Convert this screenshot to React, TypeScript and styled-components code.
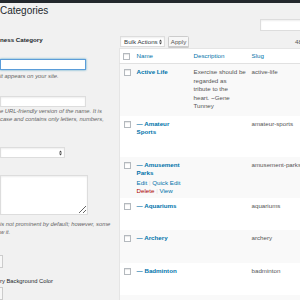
import styled, { createGlobalStyle } from "styled-components";

const GlobalStyle = createGlobalStyle`
  html, body { margin: 0; padding: 0; }
  body {
    width: 300px;
    height: 300px;
    overflow: hidden;
    background: #f1f1f1;
    font-family: "Liberation Sans", Arial, sans-serif;
    color: #444;
  }
`;

const AdminBar = styled.div`
  height: 3px;
  background: #23282d;
`;

const Page = styled.main`
  padding-top: 1px;
`;

const Title = styled.h1`
  margin: 0;
  height: 14px;
  font-size: 10px;
  font-weight: 400;
  line-height: 14px;
  color: #23282d;
`;

const Columns = styled.div`
  display: flex;
`;

const FormColumn = styled.section`
  flex: 0 0 119px;
`;

const ListColumn = styled.section`
  flex: 0 0 200px;
`;

const SectionHeading = styled.h2`
  margin: 17px 0 0;
  font-size: 6.2px;
  font-weight: 700;
  line-height: 9px;
  color: #23282d;
`;

const Field = styled.div<{ $top: number }>`
  margin-top: ${(p) => p.$top}px;
`;

const TextInput = styled.input<{ $focused?: boolean }>`
  display: block;
  box-sizing: border-box;
  width: 86px;
  height: 11px;
  margin: 0;
  padding: 0 2px;
  background: #fff;
  border: 1px solid ${(p) => (p.$focused ? "#5b9dd9" : "#ddd")};
  box-shadow: ${(p) =>
    p.$focused ? "0 0 2px rgba(30, 140, 190, 0.8)" : "inset 0 1px 2px rgba(0, 0, 0, 0.07)"};
  outline: none;
`;

const Help = styled.p<{ $top?: number }>`
  margin: ${(p) => p.$top ?? 0}px 0 0;
  font-size: 5.8px;
  font-style: italic;
  line-height: 8px;
  color: #666;
  white-space: nowrap;
`;

const FieldLabel = styled.div`
  font-size: 5.8px;
  line-height: 8px;
  color: #23282d;
  white-space: nowrap;
`;

const SelectBox = styled.div<{ $width: number }>`
  display: flex;
  align-items: center;
  justify-content: space-between;
  box-sizing: border-box;
  width: ${(p) => p.$width}px;
  height: 11px;
  padding: 0 2px 0 3px;
  background: #fff;
  border: 1px solid #ddd;
  box-shadow: inset 0 1px 2px rgba(0, 0, 0, 0.07);
  font-size: 6.2px;
  color: #32373c;
  white-space: nowrap;
`;

const TextArea = styled.textarea`
  display: block;
  box-sizing: border-box;
  width: 88px;
  height: 40px;
  margin: 0;
  background: #fff;
  border: 1px solid #ddd;
  box-shadow: inset 0 1px 2px rgba(0, 0, 0, 0.07);
  resize: vertical;
  outline: none;
`;

const ColorButton = styled.div`
  box-sizing: border-box;
  width: 3px;
  height: 13px;
  background: #f7f7f7;
  border: 1px solid #ccc;
  border-left: 0;
`;

const SearchBox = styled.input`
  display: block;
  box-sizing: border-box;
  width: 60px;
  height: 12px;
  margin: 1px 0 0 141px;
  background: #fff;
  border: 1px solid #ddd;
  box-shadow: inset 0 1px 2px rgba(0, 0, 0, 0.07);
`;

const TableNav = styled.div`
  display: flex;
  align-items: center;
  gap: 3px;
  height: 11px;
  margin-top: 5px;
  padding-left: 1px;
`;

const ApplyButton = styled.button`
  box-sizing: border-box;
  width: 21px;
  height: 11px;
  padding: 0;
  background: #f7f7f7;
  border: 1px solid #ccc;
  border-radius: 1.5px;
  box-shadow: 0 1px 0 #ccc;
  font-family: inherit;
  font-size: 6.2px;
  color: #555;
`;

const ItemCount = styled.span`
  margin-left: 103px;
  font-size: 6.2px;
  color: #555;
  white-space: nowrap;
`;

const Table = styled.table`
  width: 200px;
  margin-top: 1px;
  table-layout: fixed;
  border-collapse: collapse;
  background: #fff;
  border: 1px solid #e5e5e5;
  font-size: 6.2px;
`;

const HeadCell = styled.th`
  height: 14px;
  padding: 0 4px;
  border-bottom: 1px solid #e1e1e1;
  text-align: left;
  font-weight: 400;
  line-height: 14px;
  color: #0073aa;
`;

const CheckHead = styled.td`
  padding: 0 0 0 3px;
  border-bottom: 1px solid #e1e1e1;
  vertical-align: middle;
`;

const Row = styled.tr`
  &:nth-child(odd) {
    background: #f9f9f9;
  }
`;

const Cell = styled.td`
  padding: 4px 4px 2px;
  vertical-align: top;
  line-height: 8.5px;
  color: #555;
  white-space: nowrap;
`;

const DescriptionCell = styled(Cell)`
  padding-bottom: 5px;
`;

const CheckCell = styled.td`
  padding: 5px 0 0 4px;
  vertical-align: top;
`;

const Checkbox = styled.span`
  display: block;
  box-sizing: border-box;
  width: 7px;
  height: 7px;
  background: #fff;
  border: 1px solid #b4b9be;
  box-shadow: inset 0 1px 1px rgba(0, 0, 0, 0.1);
`;

const NameCell = styled(Cell)`
  white-space: normal;
`;

const TermName = styled.a`
  display: block;
  font-weight: 700;
  color: #0073aa;
  text-decoration: none;
`;

const RowActions = styled.div<{ $visible: boolean }>`
  padding-top: 1px;
  visibility: ${(p) => (p.$visible ? "visible" : "hidden")};
  white-space: nowrap;
  color: #ddd;
`;

const Action = styled.a<{ $danger?: boolean }>`
  color: ${(p) => (p.$danger ? "#a00" : "#0073aa")};
  text-decoration: none;
`;

function UpDownArrow() {
  return (
    <svg width="3" height="6" viewBox="0 0 3 6">
      <path d="M0 2.4 L1.5 0.4 L3 2.4 Z M0 3.6 L1.5 5.6 L3 3.6 Z" fill="#444" />
    </svg>
  );
}

type Term = {
  name: string;
  slug: string;
  depth: number;
  desc?: string[];
  hovered?: boolean;
};

const terms: Term[] = [
  {
    name: "Active Life",
    slug: "active-life",
    depth: 0,
    desc: ["Exercise should be", "regarded as", "tribute to the", "heart. ~Gene", "Tunney"],
  },
  { name: "Amateur Sports", slug: "amateur-sports", depth: 1 },
  { name: "Amusement Parks", slug: "amusement-parks", depth: 1, hovered: true },
  { name: "Aquariums", slug: "aquariums", depth: 1 },
  { name: "Archery", slug: "archery", depth: 1 },
  { name: "Badminton", slug: "badminton", depth: 1 },
  { name: "Baseball Fields", slug: "baseball-fields", depth: 1 },
];

function TermRow({ term }: { term: Term }) {
  return (
    <Row>
      <CheckCell>
        <Checkbox />
      </CheckCell>
      <NameCell>
        <TermName href="#">
          {"— ".repeat(term.depth)}
          {term.name}
        </TermName>
        <RowActions $visible={!!term.hovered}>
          <div>
            <Action href="#">Edit</Action> | <Action href="#">Quick Edit</Action>
          </div>
          <div>
            <Action href="#" $danger>
              Delete
            </Action>{" "}
            | <Action href="#">View</Action>
          </div>
        </RowActions>
      </NameCell>
      {term.desc ? (
        <DescriptionCell>
          {term.desc.map((line) => (
            <div key={line}>{line}</div>
          ))}
        </DescriptionCell>
      ) : (
        <Cell />
      )}
      <Cell>{term.slug}</Cell>
    </Row>
  );
}

export default function App() {
  return (
    <>
      <GlobalStyle />
      <AdminBar />
      <Page>
        <Title>Categories</Title>
        <Columns>
          <FormColumn>
            <SectionHeading>ness Category</SectionHeading>
            <Field $top={15}>
              <TextInput $focused />
              <Help $top={2}>it appears on your site.</Help>
            </Field>
            <Field $top={16}>
              <TextInput />
              <Help>e URL-friendly version of the name. It is</Help>
              <Help>case and contains only letters, numbers,</Help>
            </Field>
            <Field $top={24}>
              <SelectBox $width={65}>
                <span />
                <UpDownArrow />
              </SelectBox>
            </Field>
            <Field $top={17}>
              <TextArea />
              <Help $top={5}>is not prominent by default; however, some</Help>
              <Help>w it.</Help>
            </Field>
            <Field $top={19}>
              <ColorButton />
            </Field>
            <Field $top={9}>
              <FieldLabel>ry Background Color</FieldLabel>
            </Field>
            <Field $top={2}>
              <ColorButton />
            </Field>
          </FormColumn>
          <ListColumn>
            <SearchBox />
            <TableNav>
              <SelectBox $width={45}>
                Bulk Actions
                <UpDownArrow />
              </SelectBox>
              <ApplyButton>Apply</ApplyButton>
              <ItemCount>48 items</ItemCount>
            </TableNav>
            <Table>
              <colgroup>
                <col style={{ width: 13 }} />
                <col style={{ width: 57 }} />
                <col style={{ width: 58 }} />
                <col />
              </colgroup>
              <thead>
                <tr>
                  <CheckHead>
                    <Checkbox />
                  </CheckHead>
                  <HeadCell>Name</HeadCell>
                  <HeadCell>Description</HeadCell>
                  <HeadCell>Slug</HeadCell>
                </tr>
              </thead>
              <tbody>
                {terms.map((t) => (
                  <TermRow key={t.slug} term={t} />
                ))}
              </tbody>
            </Table>
          </ListColumn>
        </Columns>
      </Page>
    </>
  );
}
